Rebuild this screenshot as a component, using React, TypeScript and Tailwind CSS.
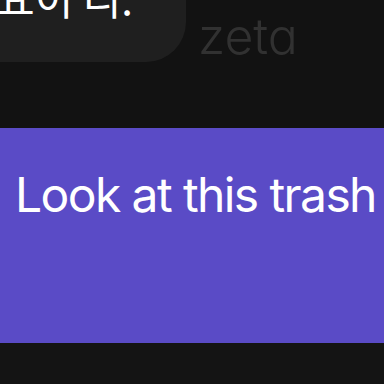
export default function App() {
  return (
    <div className="w-[384px] h-[384px] overflow-hidden bg-[#121212] flex flex-col" style={{ fontFamily: "Inter, 'Noto Sans CJK KR', sans-serif" }}>
      <div className="h-[128px] flex items-start">
        <div className="w-[186px] h-[62px] bg-[#1f1f1f] rounded-br-[40px] overflow-hidden flex items-end shrink-0">
          <span className="text-white text-[42px] leading-none mb-[44px] ml-[-4px] whitespace-nowrap font-['Noto_Sans_CJK_KR']">요이 리.</span>
        </div>
        <span className="ml-[12px] mt-[11px] text-[50px] leading-none text-[#313131] font-light [font-feature-settings:'cv11']">zeta</span>
      </div>
      <div className="h-[215px] bg-[#5a4bc6] flex items-start">
        <span className="mt-[43px] ml-[15px] text-white text-[48px] leading-none whitespace-nowrap tracking-[-1.6px]">Look at this trash</span>
      </div>
      <div className="flex-1 bg-[#141414]" />
    </div>
  );
}
